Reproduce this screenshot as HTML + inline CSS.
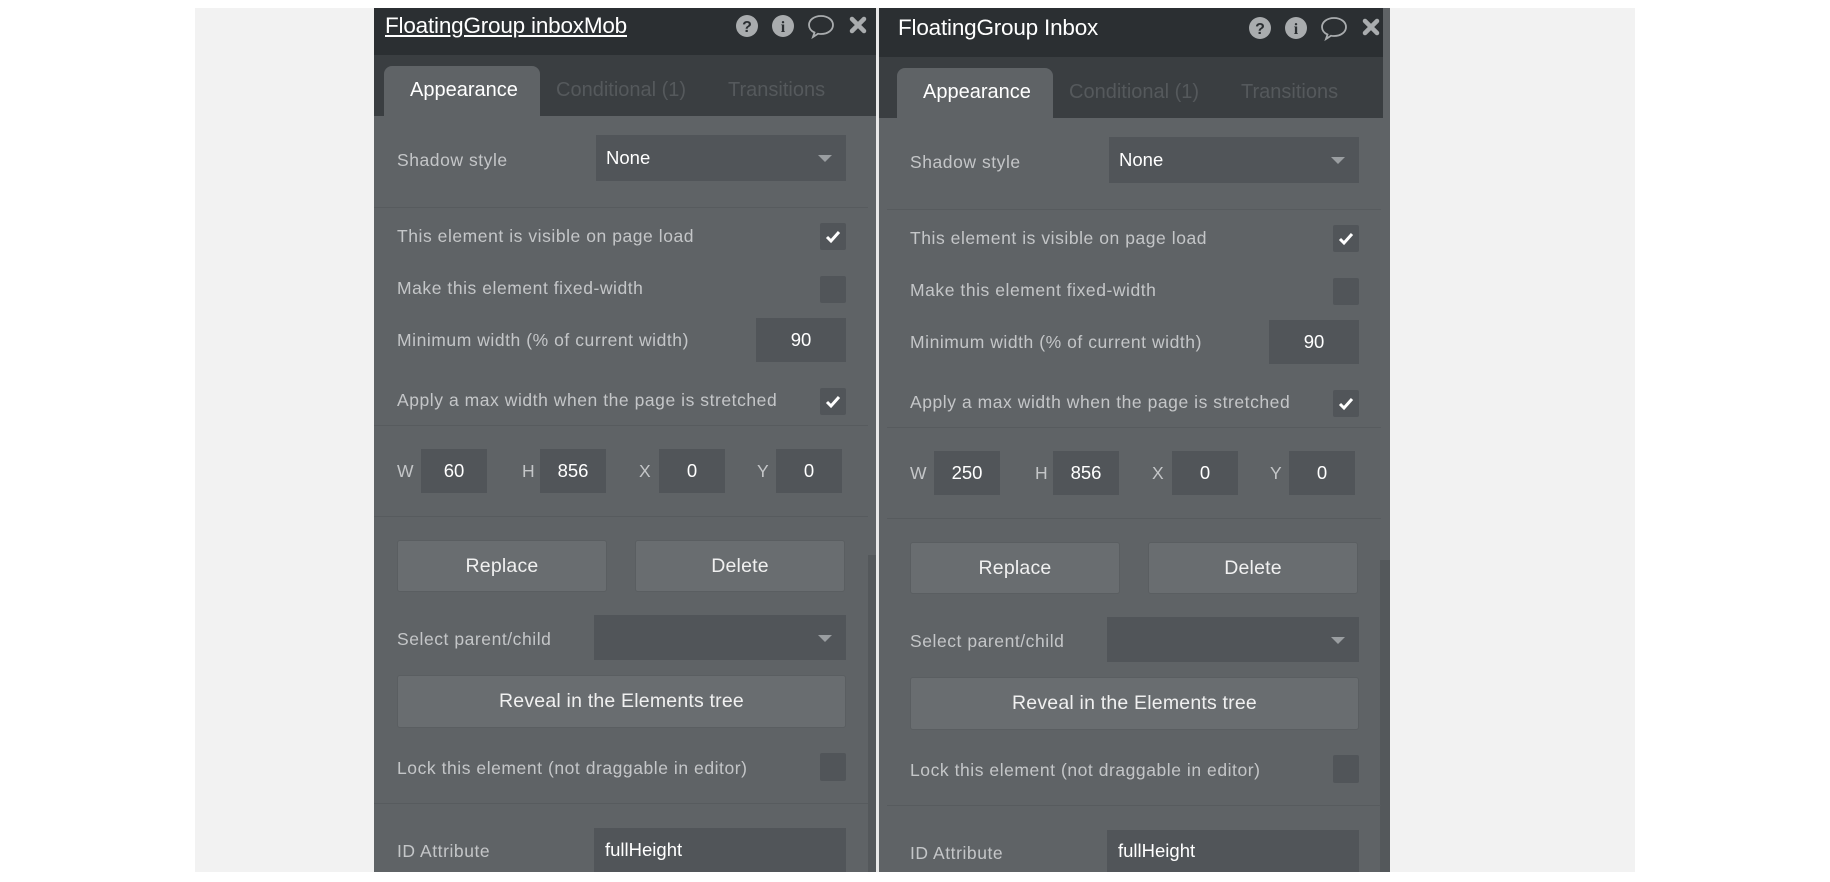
<!DOCTYPE html>
<html><head><meta charset="utf-8"><style>
*{margin:0;padding:0;box-sizing:border-box}
body{width:1830px;height:882px;background:#fff;position:relative;overflow:hidden;font-family:"Liberation Sans",sans-serif}
.abs{position:absolute}
.pg{position:absolute;left:195px;top:8px;width:1440px;height:864px;background:#f2f2f2}
.pnl{position:absolute;width:502px;height:864px}
.bg{position:absolute;left:0;top:0;width:502px;height:864px;background:#5f6366}
.hd{position:absolute;left:0;top:0;width:502px;height:47px;background:#2b2f32}
.tb{position:absolute;left:0;top:47px;width:502px;height:61px;background:#3a3e41}
.ttl{position:absolute;left:11px;top:5px;font-size:22.5px;color:#fff;letter-spacing:-0.2px;line-height:26px}
.tab{position:absolute;left:10px;top:58px;width:156px;height:50px;background:#5f6366;border-radius:8px 8px 0 0}
.tt{position:absolute;top:71px;font-size:20px;line-height:22px;color:#55595c}
.lb{position:absolute;left:23px;font-size:17.5px;letter-spacing:0.55px;color:#c4c6c8;line-height:20px;transform:translateY(-10px)}
.in{position:absolute;background:#515559;color:#fff;font-size:18.5px;display:flex;align-items:center}
.cb{position:absolute;left:446px;width:26px;height:27px;background:#515559;border-radius:2px}
.sep{position:absolute;left:0;width:494px;height:1px;background:#575b5e}
.bt{position:absolute;background:#696d70;border:1px solid #5a5e61;border-radius:3px;color:#f0f0f0;font-size:19.5px;display:flex;align-items:center;justify-content:center;letter-spacing:0.2px}
.arr{position:absolute;right:14px;top:50%;margin-top:-3px;width:0;height:0;border-left:7px solid transparent;border-right:7px solid transparent;border-top:7px solid #9a9ea1}
.c{justify-content:center}
</style></head><body>
<div class="pg"></div>
<div class="abs" style="left:876px;top:8px;width:3px;height:864px;background:#e8e8e8"></div>

<!-- LEFT PANEL -->
<div class="pnl" style="left:374px;top:8px">
<div class="bg"></div><div class="hd"></div><div class="tb"></div>
<div class="ttl" style="text-decoration:underline">FloatingGroup inboxMob</div>
<svg class="abs" style="left:355px;top:5px" width="145" height="28" viewBox="0 0 145 28">
<circle cx="18" cy="13" r="11" fill="#a9acae"/><text x="18" y="19" font-size="16" font-weight="bold" text-anchor="middle" fill="#2b2f32" font-family="Liberation Sans">?</text>
<circle cx="54" cy="13" r="11" fill="#a9acae"/><text x="54" y="19" font-size="16" font-weight="bold" text-anchor="middle" fill="#2b2f32" font-family="Liberation Serif">i</text>
<path d="M92 3c7 0 12 4 12 9s-5 9-12 9c-1 0-2 0-3-.3L84 24l1.5-4.5C82 18 80 15 80 12c0-5 5-9 12-9z" fill="none" stroke="#a9acae" stroke-width="1.8"/>
<path d="M123 6l12 12M135 6l-12 12" stroke="#a9acae" stroke-width="4.5" stroke-linecap="round"/>
</svg>
<div class="tab"></div>
<div class="tt" style="left:36px;color:#fff">Appearance</div>
<div class="tt" style="left:182px">Conditional (1)</div>
<div class="tt" style="left:354px">Transitions</div>
<div class="lb" style="top:152px">Shadow style</div>
<div class="in" style="left:222px;top:127px;width:250px;height:46px;padding-left:10px">None<div class="arr"></div></div>
<div class="sep" style="top:199px"></div>
<div class="lb" style="top:228px">This element is visible on page load</div>
<div class="cb" style="top:215px"><svg width="26" height="27"><path d="M7 14l4 4 8-9" fill="none" stroke="#fff" stroke-width="3"/></svg></div>
<div class="lb" style="top:280px">Make this element fixed-width</div>
<div class="cb" style="top:268px"></div>
<div class="lb" style="top:332px">Minimum width (% of current width)</div>
<div class="in c" style="left:382px;top:310px;width:90px;height:44px">90</div>
<div class="lb" style="top:392px">Apply a max width when the page is stretched</div>
<div class="cb" style="top:380px"><svg width="26" height="27"><path d="M7 14l4 4 8-9" fill="none" stroke="#fff" stroke-width="3"/></svg></div>
<div class="sep" style="top:417px"></div>
<div class="lb" style="top:463px">W</div><div class="in c" style="left:47px;top:441px;width:66px;height:44px">60</div>
<div class="lb" style="top:463px;left:148px">H</div><div class="in c" style="left:166px;top:441px;width:66px;height:44px">856</div>
<div class="lb" style="top:463px;left:265px">X</div><div class="in c" style="left:285px;top:441px;width:66px;height:44px">0</div>
<div class="lb" style="top:463px;left:383px">Y</div><div class="in c" style="left:402px;top:441px;width:66px;height:44px">0</div>
<div class="sep" style="top:508px"></div>
<div class="bt" style="left:23px;top:532px;width:210px;height:52px">Replace</div>
<div class="bt" style="left:261px;top:532px;width:210px;height:52px">Delete</div>
<div class="lb" style="top:631px">Select parent/child</div>
<div class="in" style="left:220px;top:607px;width:252px;height:45px"><div class="arr"></div></div>
<div class="bt" style="left:23px;top:667px;width:449px;height:53px">Reveal in the Elements tree</div>
<div class="lb" style="top:760px">Lock this element (not draggable in editor)</div>
<div class="cb" style="top:745px;height:28px"></div>
<div class="sep" style="top:795px"></div>
<div class="lb" style="top:843px">ID Attribute</div>
<div class="in" style="left:220px;top:820px;width:252px;height:44px;padding-left:11px">fullHeight</div>
<div class="abs" style="left:494px;top:547px;width:8px;height:317px;background:#54585b"></div>
</div>

<!-- RIGHT PANEL -->
<div class="abs" style="left:879px;top:8px;width:511px;height:864px;background:#5f6366"></div>
<div class="abs" style="left:879px;top:8px;width:504px;height:49px;background:#2b2f32"></div>
<div class="abs" style="left:879px;top:57px;width:504px;height:61px;background:#3a3e41"></div>
<div class="abs" style="left:1380px;top:560px;width:10px;height:312px;background:#54585b"></div>
<div class="pnl" style="left:887px;top:10px">
<div class="ttl">FloatingGroup Inbox</div>
<svg class="abs" style="left:355px;top:5px" width="145" height="28" viewBox="0 0 145 28">
<circle cx="18" cy="13" r="11" fill="#a9acae"/><text x="18" y="19" font-size="16" font-weight="bold" text-anchor="middle" fill="#2b2f32" font-family="Liberation Sans">?</text>
<circle cx="54" cy="13" r="11" fill="#a9acae"/><text x="54" y="19" font-size="16" font-weight="bold" text-anchor="middle" fill="#2b2f32" font-family="Liberation Serif">i</text>
<path d="M92 3c7 0 12 4 12 9s-5 9-12 9c-1 0-2 0-3-.3L84 24l1.5-4.5C82 18 80 15 80 12c0-5 5-9 12-9z" fill="none" stroke="#a9acae" stroke-width="1.8"/>
<path d="M123 6l12 12M135 6l-12 12" stroke="#a9acae" stroke-width="4.5" stroke-linecap="round"/>
</svg>
<div class="tab"></div>
<div class="tt" style="left:36px;color:#fff">Appearance</div>
<div class="tt" style="left:182px">Conditional (1)</div>
<div class="tt" style="left:354px">Transitions</div>
<div class="lb" style="top:152px">Shadow style</div>
<div class="in" style="left:222px;top:127px;width:250px;height:46px;padding-left:10px">None<div class="arr"></div></div>
<div class="sep" style="top:199px"></div>
<div class="lb" style="top:228px">This element is visible on page load</div>
<div class="cb" style="top:215px"><svg width="26" height="27"><path d="M7 14l4 4 8-9" fill="none" stroke="#fff" stroke-width="3"/></svg></div>
<div class="lb" style="top:280px">Make this element fixed-width</div>
<div class="cb" style="top:268px"></div>
<div class="lb" style="top:332px">Minimum width (% of current width)</div>
<div class="in c" style="left:382px;top:310px;width:90px;height:44px">90</div>
<div class="lb" style="top:392px">Apply a max width when the page is stretched</div>
<div class="cb" style="top:380px"><svg width="26" height="27"><path d="M7 14l4 4 8-9" fill="none" stroke="#fff" stroke-width="3"/></svg></div>
<div class="sep" style="top:417px"></div>
<div class="lb" style="top:463px">W</div><div class="in c" style="left:47px;top:441px;width:66px;height:44px">250</div>
<div class="lb" style="top:463px;left:148px">H</div><div class="in c" style="left:166px;top:441px;width:66px;height:44px">856</div>
<div class="lb" style="top:463px;left:265px">X</div><div class="in c" style="left:285px;top:441px;width:66px;height:44px">0</div>
<div class="lb" style="top:463px;left:383px">Y</div><div class="in c" style="left:402px;top:441px;width:66px;height:44px">0</div>
<div class="sep" style="top:508px"></div>
<div class="bt" style="left:23px;top:532px;width:210px;height:52px">Replace</div>
<div class="bt" style="left:261px;top:532px;width:210px;height:52px">Delete</div>
<div class="lb" style="top:631px">Select parent/child</div>
<div class="in" style="left:220px;top:607px;width:252px;height:45px"><div class="arr"></div></div>
<div class="bt" style="left:23px;top:667px;width:449px;height:53px">Reveal in the Elements tree</div>
<div class="lb" style="top:760px">Lock this element (not draggable in editor)</div>
<div class="cb" style="top:745px;height:28px"></div>
<div class="sep" style="top:795px"></div>
<div class="lb" style="top:843px">ID Attribute</div>
<div class="in" style="left:220px;top:820px;width:252px;height:42px;padding-left:11px">fullHeight</div>
</div>
</body></html>
